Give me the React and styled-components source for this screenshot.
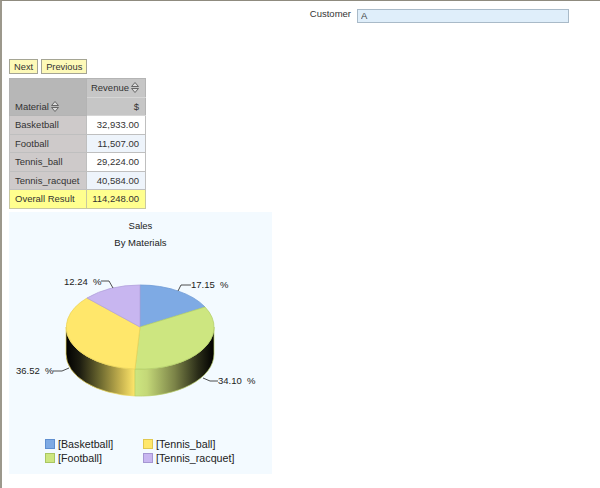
import React from 'react';
import styled, {createGlobalStyle} from 'styled-components';

const Global = createGlobalStyle`
  html, body {
    margin: 0;
    padding: 0;
    background: #fff;
  }
  * { box-sizing: border-box; }
`;

const Page = styled.div`
  width: 600px;
  height: 488px;
  overflow: hidden;
  border-top: 1px solid #8f8b7f;
  border-left: 2px solid #9c988c;
  padding: 8px 31px 0 7px;
  font-family: "Liberation Sans", Arial, sans-serif;
  font-size: 9.5px;
  color: #333;
`;

const Filter = styled.div`
  display: flex;
  justify-content: flex-end;
  align-items: center;
  gap: 6px;
  height: 14px;
`;

const FilterLabel = styled.span`
  color: #333;
  position: relative;
  top: -3px;
`;

const FilterInput = styled.input`
  width: 212px;
  height: 14px;
  padding: 0 0 1px 3px;
  background: #dfeefa;
  border: 1px solid #a9bac8;
  font: 9.5px "Liberation Sans", Arial, sans-serif;
  color: #444;
  outline: 0;
`;

const Buttons = styled.div`
  display: flex;
  gap: 3px;
  margin-top: 36px;
`;

const Button = styled.button`
  height: 15px;
  padding: 0 4px;
  background: #fdf9b8;
  border: 1px solid #a5a594;
  font: 9.3px "Liberation Sans", Arial, sans-serif;
  color: #333;
`;

const Table = styled.table`
  margin-top: 4px;
  border-collapse: collapse;
  table-layout: fixed;
  width: 137px;
  border: 1px solid #b4b4b4;
`;

const Corner = styled.th`
  width: 77px;
  background: #b7b7b7;
  border: 1px solid #b4b4b4;
  font-weight: normal;
  text-align: left;
  vertical-align: bottom;
  white-space: nowrap;
  padding: 0 0 3px 5px;
`;

const Head = styled.th`
  height: 18.5px;
  background: #c6c6c6;
  border: 1px solid #b4b4b4;
  border-bottom-color: #d6d6d6;
  font-weight: normal;
  text-align: right;
  white-space: nowrap;
  padding: 0 6px 0 0;
`;

const RowHead = styled.td`
  height: 18.5px;
  padding: 0 5px;
  white-space: nowrap;
  background: ${p => (p.$total ? '#ffff8e' : '#cecaca')};
  border: 1px solid ${p => (p.$total ? '#c8c8a0' : '#bfbfbf')};
`;

const Value = styled.td`
  padding: 0 6px 0 0;
  text-align: right;
  background: ${p => (p.$total ? '#ffff8e' : p.$alt ? '#eef4fb' : '#fff')};
  border: 1px solid ${p => (p.$total ? '#c8c8a0' : '#bfbfbf')};
`;

const Chart = styled.div`
  width: 263px;
  height: 262px;
  margin-top: 3px;
  background: #f3faff;
`;

const Titles = styled.div`
  text-align: center;
  color: #222;
  line-height: 17px;
  padding-top: 5px;
`;

const Pie = styled.svg`
  display: block;
  width: 263px;
  height: 178px;
  text {
    font: 9.5px "Liberation Sans", Arial, sans-serif;
    fill: #222;
    white-space: pre;
  }
`;

const Legend = styled.div`
  display: grid;
  grid-template-columns: 98px auto;
  grid-auto-rows: 14px;
  padding-left: 36px;
  margin-top: 8px;
  font-size: 10.7px;
  color: #222;
`;

const LegendItem = styled.div`
  display: flex;
  align-items: center;
  gap: 3px;
`;

const Swatch = styled.span`
  width: 10px;
  height: 10px;
  background: ${p => p.$color};
  border: 1px solid ${p => p.$edge};
`;

const Sort = () => (
  <svg width="8" height="11" viewBox="0 0 8 11" style={{verticalAlign: '-2px', marginLeft: 2}}>
    <path d="M4 0.5 L7.5 4.5 H0.5 Z M0.5 6.5 H7.5 L4 10.5 Z" fill="#ddd" stroke="#666" strokeWidth="1" />
  </svg>
);

const rows = [
  ['Basketball', '32,933.00'],
  ['Football', '11,507.00'],
  ['Tennis_ball', '29,224.00'],
  ['Tennis_racquet', '40,584.00'],
];

const legend = [
  ['[Basketball]', '#7eaae4', '#5f8fd0'],
  ['[Tennis_ball]', '#ffe76b', '#e0c850'],
  ['[Football]', '#cde680', '#a9c662'],
  ['[Tennis_racquet]', '#c8b6f0', '#a596d2'],
];

const App = () => (
  <Page>
    <Global />
    <Filter>
      <FilterLabel>Customer</FilterLabel>
      <FilterInput readOnly value="A" />
    </Filter>
    <Buttons>
      <Button>Next</Button>
      <Button>Previous</Button>
    </Buttons>
    <Table>
      <thead>
        <tr>
          <Corner rowSpan={2}>Material<Sort /></Corner>
          <Head>Revenue<Sort /></Head>
        </tr>
        <tr>
          <Head>$</Head>
        </tr>
      </thead>
      <tbody>
        {rows.map(([name, val], i) => (
          <tr key={name}>
            <RowHead>{name}</RowHead>
            <Value $alt={i % 2 === 1}>{val}</Value>
          </tr>
        ))}
        <tr>
          <RowHead $total>Overall Result</RowHead>
          <Value $total>114,248.00</Value>
        </tr>
      </tbody>
    </Table>
    <Chart>
      <Titles>
        <div>Sales</div>
        <div>By Materials</div>
      </Titles>
      {/* pie coordinates follow the screenshot, the viewBox skips the titles above */}
      <Pie viewBox="9 251 263 178">
        <defs>
          <linearGradient id="sideY" gradientUnits="userSpaceOnUse" x1="66" y1="0" x2="135" y2="0">
            <stop offset="0" stopColor="#000" />
            <stop offset="0.2" stopColor="#1c1c10" />
            <stop offset="0.5" stopColor="#6e6a30" />
            <stop offset="0.8" stopColor="#c8b450" />
            <stop offset="1" stopColor="#ffe76b" />
          </linearGradient>
          <linearGradient id="sideG" gradientUnits="userSpaceOnUse" x1="135" y1="0" x2="214" y2="0">
            <stop offset="0" stopColor="#cde680" />
            <stop offset="0.15" stopColor="#c4d878" />
            <stop offset="0.5" stopColor="#7c8448" />
            <stop offset="0.8" stopColor="#2a2c18" />
            <stop offset="1" stopColor="#000" />
          </linearGradient>
        </defs>
        <path d="M66 327 V354 A74 42 0 0 0 135 396 V369 A74 42 0 0 1 66 327 Z" fill="url(#sideY)" stroke="#ecd95e" strokeWidth="0.7" />
        <path d="M135 369 V396 A74 42 0 0 0 214 354 V327 A74 42 0 0 1 135 369 Z" fill="url(#sideG)" stroke="#b9cf68" strokeWidth="0.7" />
        <path d="M140 327 L140 285 A74 42 0 0 1 205 307 Z" fill="#7eaae4" stroke="#6f9ad6" strokeWidth="0.8" />
        <path d="M140 327 L205 307 A74 42 0 0 1 135 369 Z" fill="#cde680" stroke="#b5d06a" strokeWidth="0.8" />
        <path d="M140 327 L135 369 A74 42 0 0 1 87 298 Z" fill="#ffe76b" stroke="#ecd458" strokeWidth="0.8" />
        <path d="M140 327 L87 298 A74 42 0 0 1 140 285 Z" fill="#c8b6f0" stroke="#b3a2dc" strokeWidth="0.8" />
        <g fill="none" stroke="#222" strokeWidth="0.8">
          <path d="M178 291 L181 285 H191" />
          <path d="M203 378 L210 381 H218" />
          <path d="M53 371 H62 L69 368" />
          <path d="M101 281 H109 L113 288" />
        </g>
        <text x="191" y="288">17.15  %</text>
        <text x="218" y="384">34.10  %</text>
        <text x="16" y="374">36.52  %</text>
        <text x="64" y="285">12.24  %</text>
      </Pie>
      <Legend>
        {legend.map(([label, color, edge]) => (
          <LegendItem key={label}>
            <Swatch $color={color} $edge={edge} />
            {label}
          </LegendItem>
        ))}
      </Legend>
    </Chart>
  </Page>
);

export default App;
